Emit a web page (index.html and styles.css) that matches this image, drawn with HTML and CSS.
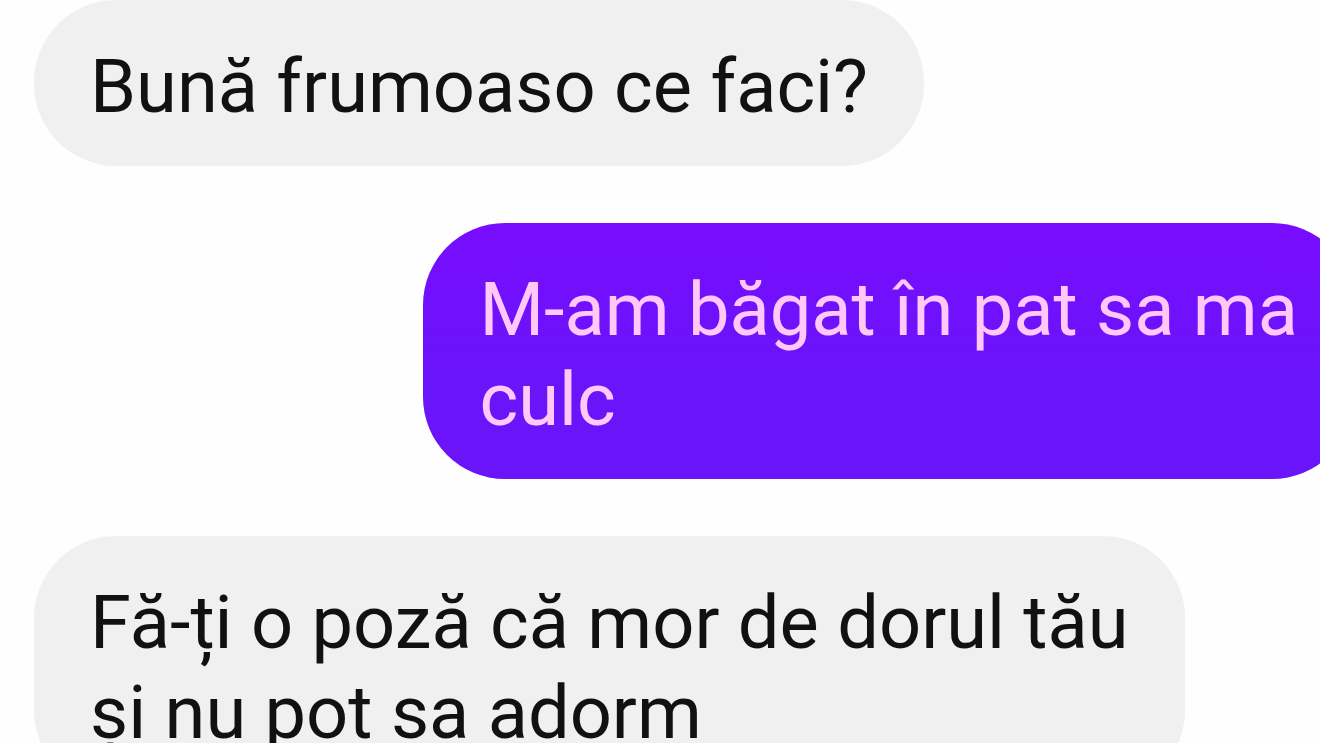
FILE: index.html
```html
<!DOCTYPE html>
<html lang="ro">
<head>
<meta charset="utf-8">
<title>Conversație</title>
<link rel="stylesheet" href="styles.css">
</head>
<body>
<main class="chat">
  <p class="bubble received">Bună frumoaso ce faci?</p>
  <p class="bubble sent">M-am băgat în pat sa ma<br>culc</p>
  <p class="bubble received">Fă-ți o poză că mor de dorul tău<br>și nu pot sa adorm</p>
</main>
</body>
</html>
```
FILE: styles.css
```css
body {
  margin: 0;
  background: #fefefe;
  overflow: hidden;
}

.chat {
  display: flex;
  flex-direction: column;
  align-items: flex-start;
  gap: 57px;
  height: 100vh;
  padding-left: 34px;
  box-sizing: border-box;
  overflow: hidden;
  font-family: Roboto, "Liberation Sans", sans-serif;
  font-size: 74px;
  line-height: 90px;
}

.bubble {
  flex: none;
  margin: 0;
  padding: 42px 56px 34px;
  border-radius: 82px;
  white-space: nowrap;
}

.received {
  background: #f0f0f0;
  color: #111;
}

.sent {
  align-self: flex-end;
  margin-right: -34px;
  background: linear-gradient(#780cff, #6a14fa 60%);
  color: #ffc8f8;
}
```
